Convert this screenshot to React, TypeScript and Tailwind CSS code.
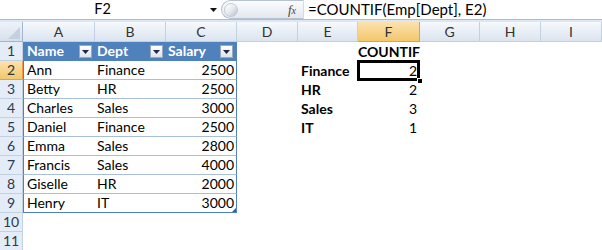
import React from "react";

const COLS = ["A", "B", "C", "D", "E", "F", "G", "H", "I"];
const GRID = "grid grid-cols-[23px_72px_71px_71px_61px_60px_62px_60px_61px_61px]";

type Row = { a?: string; b?: string; c?: string; e?: string; f?: string };
const data: Row[] = [
  { a: "Name", b: "Dept", c: "Salary", f: "COUNTIF" },
  { a: "Ann", b: "Finance", c: "2500", e: "Finance", f: "2" },
  { a: "Betty", b: "HR", c: "2500", e: "HR", f: "2" },
  { a: "Charles", b: "Sales", c: "3000", e: "Sales", f: "3" },
  { a: "Daniel", b: "Finance", c: "2500", e: "IT", f: "1" },
  { a: "Emma", b: "Sales", c: "2800" },
  { a: "Francis", b: "Sales", c: "4000" },
  { a: "Giselle", b: "HR", c: "2000" },
  { a: "Henry", b: "IT", c: "3000" },
  {},
  {},
];

function FilterBtn() {
  return (
    <div className="absolute right-[3px] top-[3px] w-[13px] h-[13px] border border-[#9aa9bd] bg-gradient-to-b from-[#ffffff] to-[#dfe3ea] flex items-center justify-center">
      <svg width="7" height="4" viewBox="0 0 7 4">
        <path d="M0 0 L7 0 L3.5 4 Z" fill="#1e2a44" />
      </svg>
    </div>
  );
}

export default function App() {
  return (
    <div className="w-[602px] h-[250px] overflow-hidden bg-white font-['Lato',_'Open_Sans',_sans-serif] text-[14px] leading-none text-black">
      {/* Formula bar */}
      <div className="h-[19px] flex items-stretch bg-white">
        <div className="w-[205px] flex items-center justify-center text-[14.5px]">F2</div>
        <div className="w-[16px] flex items-center justify-center">
          <svg width="7" height="4" viewBox="0 0 7 4">
            <path d="M0 0 L7 0 L3.5 4 Z" fill="#111" />
          </svg>
        </div>
        <div className="w-[82px] h-[19px] rounded-l-[10px] border border-r-0 border-[#b7c3d3] bg-gradient-to-b from-[#fbfcfd] to-[#e3e8ef] flex items-center justify-between pl-[2px] pr-[7px]">
          <div className="w-[14px] h-[14px] rounded-full bg-gradient-to-br from-[#ffffff] via-[#e8ebef] to-[#b9c0ca] border border-[#c4cad3]" />
          <span className="font-['Liberation_Serif',_serif] italic text-[13px] text-[#444]">
            f<span className="text-[10px]">x</span>
          </span>
        </div>
        <div className="flex-1 border-l border-[#d5dbe3] flex items-center pl-[4px] text-[15px]">
          =COUNTIF(Emp[Dept], E2)
        </div>
      </div>
      <div className="h-[1px] bg-[#a8bcd4]" />
      <div className="h-[2px] bg-[#dde7f3]" />

      {/* Column headers */}
      <div className={`${GRID} h-[20px]`}>
        <div className="relative bg-gradient-to-b from-[#eef3f9] to-[#d6e0ec] border-r border-b border-[#9eb6ce]">
          <svg className="absolute right-[2px] bottom-[2px]" width="12" height="12" viewBox="0 0 12 12">
            <path d="M12 0 L12 12 L0 12 Z" fill="#c5d0de" />
          </svg>
        </div>
        {COLS.map((c) => (
          <div
            key={c}
            className={
              c === "F"
                ? "flex items-center justify-center bg-gradient-to-b from-[#fbe2ae] to-[#f3c76a] border-r border-b border-[#f29b3c] text-[#333]"
                : "flex items-center justify-center bg-gradient-to-b from-[#f6f9fc] to-[#dbe4ef] border-r border-b border-[#c2d1e2] text-[#333]"
            }
          >
            {c}
          </div>
        ))}
      </div>

      {/* Rows */}
      {data.map((r, i) => {
        const n = i + 1;
        const header = n === 1;
        const inTable = n <= 9;
        const lastTable = n === 9;
        const tCell = (extra: string) =>
          header
            ? `relative flex items-center bg-[#4f81bd] text-white font-bold border-b border-[#4f81bd] ${extra}`
            : `relative flex items-center bg-white border-b ${lastTable ? "border-[#4f81bd]" : "border-[#a7bfdd]"} ${extra}`;
        return (
          <div key={n} className={`${GRID} h-[19px]`}>
            <div
              className={
                n === 2
                  ? "flex items-center justify-center bg-gradient-to-b from-[#fbe2ae] to-[#f3c76a] border-r border-b border-[#f29b3c] text-[#333]"
                  : "flex items-center justify-center bg-[#e4ecf7] border-r border-b border-[#c2d1e2] text-[#2b3a4f]"
              }
            >
              {n}
            </div>
            {inTable ? (
              <>
                <div className={tCell("pl-[3px] border-l border-l-[#4f81bd]")}>
                  {r.a}
                  {header && <FilterBtn />}
                </div>
                <div className={tCell("pl-[2px]")}>
                  {r.b}
                  {header && <FilterBtn />}
                </div>
                <div className={tCell(`border-r border-r-[#4f81bd] ${header ? "pl-[2px]" : "justify-end pr-[2px]"}`)}>
                  {r.c}
                  {header && <FilterBtn />}
                  {lastTable && (
                    <svg className="absolute right-[0px] bottom-[0px]" width="4" height="4" viewBox="0 0 4 4">
                      <path d="M4 0 L4 4 L0 4 Z" fill="#2f5fa8" />
                    </svg>
                  )}
                </div>
              </>
            ) : (
              <>
                <div />
                <div />
                <div />
              </>
            )}
            <div />
            <div className="flex items-center pl-[3px] font-bold">{r.e}</div>
            <div
              className={`relative flex items-center ${
                header ? "justify-center font-bold" : "justify-end pr-[3px]"
              }`}
            >
              {r.f}
              {n === 2 && (
                <>
                  <div className="absolute left-[-1px] top-[-1px] right-[0px] bottom-[-1px] border-[3px] border-black" />
                  <div className="absolute right-[-3px] bottom-[-4px] w-[6px] h-[6px] bg-black border border-white" />
                </>
              )}
            </div>
            <div />
            <div />
            <div />
          </div>
        );
      })}
    </div>
  );
}
